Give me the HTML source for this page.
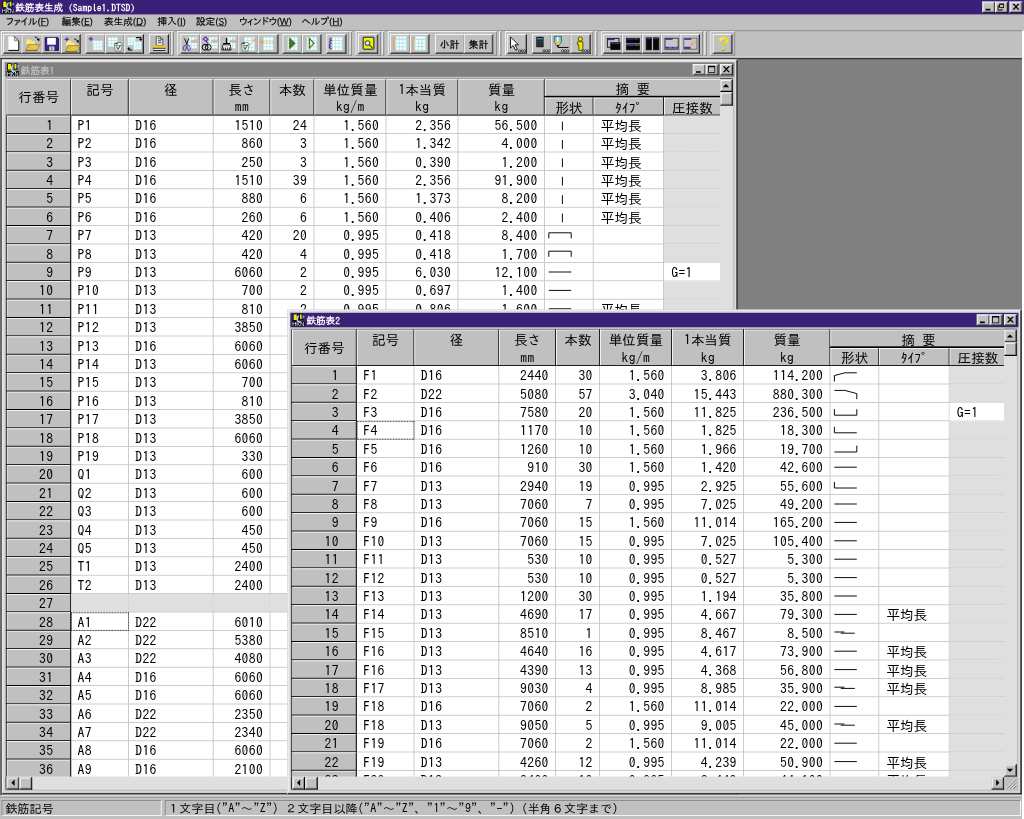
<!DOCTYPE html>
<html lang="ja"><head><meta charset="utf-8"><title>鉄筋表生成 (Sample1.DTSD)</title>
<style>
html,body{margin:0;padding:0}
body{width:1024px;height:819px;overflow:hidden;background:#c0c0c0;position:relative}
#scl{position:absolute;left:0;top:0;width:5120px;height:4096px;transform:scale(.2);transform-origin:0 0;will-change:transform;overflow:hidden}
#root{position:absolute;left:0;top:0;width:1280px;height:1024px;zoom:4;overflow:hidden;
 font-family:"IPAPGothic","IPAGothic","Liberation Sans","Noto Sans CJK JP",sans-serif;font-size:12px;color:#000}
#root div,#root span,#root i,#root b{box-sizing:border-box}
svg{display:block}
/* ---------- app title ---------- */
#title{position:absolute;left:0;top:0;width:1280px;height:18px;background:#3a2076}
#title .ico{position:absolute;left:2px;top:1px}
#title .tt{position:absolute;left:19px;top:0;line-height:19px;color:#fff;font-size:12px;white-space:nowrap;font-family:"IPAGothic","Liberation Mono","Noto Sans CJK JP",monospace;font-weight:bold}
.cb{position:absolute;top:2px;width:16px;height:14px;background:#c0c0c0;border:1px solid;border-color:#fff #000 #000 #fff;box-shadow:inset -1px -1px 0 #808080,inset 1px 1px 0 #dfdfdf}
.cb svg{position:absolute;left:1px;top:1px}
#title .b1{left:1228px}#title .b2{left:1244px}#title .b3{left:1262px}
/* ---------- menu ---------- */
#menu{position:absolute;left:0;top:18px;width:1280px;height:19px}
.mi{position:absolute;top:0;line-height:17px;white-space:nowrap;font-size:12px;-webkit-text-stroke:.2px #000}
.mi u{text-decoration:underline}
/* ---------- toolbar ---------- */
#tool{position:absolute;left:0;top:38px;width:1280px;height:34px;border-top:1px solid #808080}
#tool:after{content:"";position:absolute;left:0;top:32px;width:1280px;height:1px;background:#fff}
.band{position:absolute;top:0;height:30.5px;border:1px solid;border-color:#fff #808080 #808080 #fff}
.grp{position:absolute;top:0;height:30.5px;width:3px;border:1px solid;border-color:#fff #808080 #808080 #fff}
.tbtn{position:absolute;top:3.5px;height:24.5px;border:1px solid;border-color:#fff #000 #000 #fff;box-shadow:inset -1px -1px 0 #808080;overflow:hidden}
.tbtn.mid{border-right-color:#909090;box-shadow:inset 0 -1px 0 #808080}
.tbtn svg{position:absolute;left:-1px;top:-1px}
.tbtn.tx{font-size:12px;text-align:center;line-height:23px;font-weight:normal;letter-spacing:0;-webkit-text-stroke:.3px #000}
/* ---------- MDI client ---------- */
#mdiwrap{position:absolute;left:0;top:72px;width:1280px;height:923px;border:1px solid;border-color:#808080 #fff #fff #808080}
#mdi{position:absolute;left:0;top:0;width:1278px;height:921px;background:#808080;border:1px solid;border-color:#000 #c0c0c0 #c0c0c0 #000;overflow:hidden}
.win{position:absolute;background:#c0c0c0}
.fr1,.fr2{position:absolute;border:1px solid}
.fr1{left:0;top:0;right:0;bottom:0;border-width:1px 1.5px 1.5px 1px;border-color:#e4e4e4 #000 #000 #e4e4e4}
.fr2{left:1px;top:1px;right:1.5px;bottom:1.5px;border-color:#fff #808080 #808080 #fff}
.fr3{position:absolute;left:2px;top:2px;right:2px;bottom:2px;border:2px solid #dcdcdc}
.cap{position:absolute;left:4px;top:4px;right:4px;height:18px}
.inact .cap{background:#808080;color:#c0c0c0}
.act .cap{background:#3a2076;color:#fff}
.cap .ico{position:absolute;left:2px;top:1px}
.cap .ct{position:absolute;left:20px;top:0;line-height:19px;font-size:12px;white-space:nowrap;font-family:"IPAGothic","Liberation Mono","Noto Sans CJK JP",monospace;font-weight:bold}
.cap .b3{right:2px}.cap .b2{right:20px}.cap .b1{right:36px}
/* ---------- grid ---------- */
.grid{position:absolute}
.gbody{position:absolute;left:0;top:0;overflow:hidden;background:#fff;font-family:"IPAGothic","Liberation Mono","Noto Sans CJK JP",monospace;font-size:17px}
.hdr{position:absolute;left:0;top:0;width:100%;height:46.5px;background:#000}
.hc{position:absolute;background:#c0c0c0;border-top:1px solid #fff;border-left:1px solid #fff;border-right:.25px solid #000;border-bottom:.25px solid #000;text-align:center;white-space:nowrap;overflow:hidden;box-shadow:1px 0 0 #000}
.hc .h1{position:absolute;left:0;right:0;top:0;line-height:24px}
.hc .h2{position:absolute;left:0;right:0;top:22px;line-height:24px;letter-spacing:.5px}
.rows{position:absolute;left:0;top:0;width:100%;height:100%}
.r{position:absolute;left:0;width:100%;height:23px;line-height:25px;white-space:nowrap}
.r b{position:absolute;left:0;top:0;width:82px;height:23px;background:#c0c0c0;border:1.25px solid #000;border-top:0;box-shadow:inset 1px 1px 0 #fff;font-weight:normal;text-align:right;padding-right:21px;letter-spacing:.5px}
.r i{position:absolute;top:0;height:23px;border-right:1px solid #c0c0c0;border-bottom:1px solid #c0c0c0;font-style:normal;overflow:hidden}
.c1{left:82px;width:72px;padding-left:8px;letter-spacing:.5px}
.c2{left:154px;width:106px;padding-left:8px;letter-spacing:.5px}
.c3{left:260px;width:71px;text-align:right;padding-right:8px;letter-spacing:.5px}
.c4{left:331px;width:55px;text-align:right;padding-right:8px;letter-spacing:.5px}
.c5{left:386px;width:90px;text-align:right;padding-right:8px;letter-spacing:.5px}
.c6{left:476px;width:90px;text-align:right;padding-right:8px;letter-spacing:.5px}
.c7{left:566px;width:108px;text-align:right;padding-right:8px;letter-spacing:.5px}
.c8{left:674px;width:61px}
.c9{left:735px;width:88px;padding-left:9px}
.c10{left:823px;width:72px;padding-left:9px;background:#dfdfdf;border-bottom:1px dotted #b8b8b8 !important;border-right:0 !important;letter-spacing:.5px}
.c10.w{background:#fff;width:71px}
.r.blank i{background:#dfdfdf;border-color:#d0d0d0}
.r i.foc{outline:1px dotted #000;outline-offset:-1px}
.shp{position:absolute;left:0;top:0;fill:none;stroke:#000;stroke-width:1.2}
/* ---------- scrollbars ---------- */
.vs{position:absolute;width:16px;background:#dfdfdf;border-top:1px solid #000}
.hs{position:absolute;height:16px;background:#dfdfdf;border-left:1.25px solid #000}
.sb{position:absolute;left:0;top:0;width:16px;height:16px;background:#c0c0c0;border:1px solid;border-width:1px 1.25px 1.25px 1px;border-color:#dfdfdf #000 #000 #dfdfdf;box-shadow:inset -1px -1px 0 #808080,inset 1px 1px 0 #fff}
.sb svg{position:absolute;left:-1px;top:-1px}
.grip{position:absolute;top:0;width:16px;height:16px;background:#c0c0c0}
/* ---------- status ---------- */
#status{position:absolute;left:0;top:995px;width:1280px;height:29px;background:#c0c0c0}
#status:before{content:"";position:absolute;left:0;top:1.5px;width:1280px;height:1px;background:#808080;opacity:.6}
.sp{position:absolute;top:5px;height:20px;border:1px solid;border-color:#808080 #fff #fff #808080;overflow:hidden;white-space:nowrap}
.sp span{position:absolute;left:4px;top:0;line-height:19px;font-family:"IPAGothic","Liberation Mono","Noto Sans CJK JP",monospace;font-size:15px}
#redge{position:absolute;left:1277.5px;top:38px;width:2.5px;height:986px;background:#fff;z-index:3}
.sp .st2{left:2px;letter-spacing:.1px}
.sp .st2 em{font-style:normal;letter-spacing:.48px}

</style></head>
<body>
<svg width="0" height="0" style="position:absolute"><defs>
<g id="appico">
<rect x="0" y="10" width="16" height="6" fill="#000"/>
<rect x="1" y="0" width="6" height="9" fill="#000"/>
<rect x="2" y="1" width="4" height="7" fill="#f8e800"/>
<path d="M9.500 2.500q-3.500 1-3 5t5 2.500" fill="none" stroke="#a8e8e8" stroke-width="1.700"/>
<rect x="9" y="0" width="5" height="8" fill="#000"/>
<rect x="10" y="1" width="2" height="6" fill="#f0e020"/>
<rect x="12" y="1" width="1" height="6" fill="#40a040"/>
<path d="M13 3h2v2h-2" fill="none" stroke="#d0d0ff" stroke-width=".8"/>
<text x="0.300" y="15.400" font-family="Liberation Sans, sans-serif" font-size="6.300" font-weight="normal" fill="#fff" textLength="15" lengthAdjust="spacingAndGlyphs">HKN</text>
</g></defs></svg>
<div id="scl"><div id="root">
<div id="title"><svg class="ico" width="16" height="16" viewBox="0 0 16 16"><use href="#appico"/></svg><span class="tt">鉄筋表生成 (Sample1.DTSD)</span>
<span class="cb b1"><svg width="12" height="10" viewBox="0 0 12 10"><path d="M2 7h6v2H2z"/></svg></span>
<span class="cb b2"><svg width="12" height="10" viewBox="0 0 12 10"><path d="M3 0h6v6H3zM4 2v3h4V2zM1 3h2v1H2v4h4V7h1v2H1z" fill-rule="evenodd"/></svg></span>
<span class="cb b3"><svg width="12" height="10" viewBox="0 0 12 10"><path d="M1.500 .800h2.200L6 3.200 8.300 .800h2.200L7.100 4.500 10.500 8.200H8.300L6 5.800 3.700 8.200H1.500L4.900 4.500z"/></svg></span>
</div>
<div id="menu"><span class="mi" style="left:7.5px;width:56.5px">ファイル(<u>F</u>)</span><span class="mi" style="left:77px;width:39px">編集(<u>E</u>)</span><span class="mi" style="left:130px;width:51px">表生成(<u>D</u>)</span><span class="mi" style="left:197px;width:33px">挿入(<u>I</u>)</span><span class="mi" style="left:245px;width:39px">設定(<u>S</u>)</span><span class="mi" style="left:299px;width:63.5px">ウィンドウ(<u>W</u>)</span><span class="mi" style="left:377px;width:49px">ヘルプ(<u>H</u>)</span></div>
<div id="tool"><div class="band" style="left:1.25px;width:212.50px"></div>
<div class="tbtn mid" style="left:4.12px;width:23.00px"><svg width="26" height="26" viewBox="0 0 26 26"><path d="M6.500 3h7.500l5.500 5.500v12h-13z" fill="#fff"/><path d="M13.500 3l6 6v11.500h-13" fill="none" stroke="#000" stroke-width="1.250"/><path d="M14 4v4.500h4.500" fill="#d8d8d8" stroke="#606060" stroke-width=".8"/></svg></div>
<div class="tbtn mid" style="left:27.12px;width:24.88px"><svg width="26" height="26" viewBox="0 0 26 26"><g transform="translate(6 8)"><path d="M0 0.500q0-1.500 1.500-1.500h4l1.500 2h3.500v4H0z" fill="#f8f070"/><path d="M2.500 5h15l-4 7.500H-1z" fill="#d8b040"/><path d="M2.500 5h15l-4 7.500H-1z" fill="none" stroke="#907020" stroke-width=".7"/><path d="M3 7l9 4M6 6l8 4M1 9.500l8 2.500M9 6l6 3" stroke="#f0e060" stroke-width=".9"/><path d="M-1 12.800h14.500" stroke="#506020" stroke-width="1"/></g><path d="M16.500 3.500q3 .5 4.500 3.500" fill="none" stroke="#000" stroke-width="1.100"/><path d="M19 6.500l3.500-.8-.6 3.800z"/></svg></div>
<div class="tbtn mid" style="left:52.00px;width:24.25px"><svg width="26" height="26" viewBox="0 0 26 26"><path d="M4.500 4.500h15.500l1 1v15h-16.500z" fill="#3a2090" stroke="#100830" stroke-width="1"/><rect x="7" y="4.800" width="10.800" height="8.600" fill="#fff"/><rect x="9.600" y="15.500" width="6.400" height="5.300" fill="#d8d8d8"/><rect x="11.800" y="16.300" width="1.800" height="4.500" fill="#808080"/></svg></div>
<div class="tbtn" style="left:76.25px;width:24.50px"><svg width="26" height="26" viewBox="0 0 26 26"><g transform="translate(6.5 9.5)"><path d="M0 0.500q0-1.500 1.500-1.500h4l1.500 2h3.500v4H0z" fill="#f8f070"/><path d="M2.500 5h15l-4 7.500H-1z" fill="#d8b040"/><path d="M2.500 5h15l-4 7.500H-1z" fill="none" stroke="#907020" stroke-width=".7"/><path d="M3 7l9 4M6 6l8 4M1 9.500l8 2.500M9 6l6 3" stroke="#f0e060" stroke-width=".9"/><path d="M-1 12.800h14.500" stroke="#506020" stroke-width="1"/></g><path d="M16.500 6q3 .5 4 3" fill="none" stroke="#000" stroke-width="1.100"/><path d="M19 8.500l3.500-.6-.8 3.600z"/><path d="M4.500 6.800h5.500M7.200 4.200v5.200" stroke="#5030b0" stroke-width="1.500"/></svg></div>
<div class="tbtn mid" style="left:107.00px;width:24.25px"><svg width="26" height="26" viewBox="0 0 26 26"><rect x="9" y="8" width="12.4" height="12.4" fill="#b8e6e6"/><rect x="10" y="9" width="2.8" height="2.8" fill="#fff"/><rect x="10" y="12.8" width="2.8" height="2.8" fill="#fff"/><rect x="10" y="16.6" width="2.8" height="2.8" fill="#fff"/><rect x="13.8" y="9" width="2.8" height="2.8" fill="#fff"/><rect x="13.8" y="12.8" width="2.8" height="2.8" fill="#fff"/><rect x="13.8" y="16.6" width="2.8" height="2.8" fill="#fff"/><rect x="17.6" y="9" width="2.8" height="2.8" fill="#fff"/><rect x="17.6" y="12.8" width="2.8" height="2.8" fill="#fff"/><rect x="17.6" y="16.6" width="2.8" height="2.8" fill="#fff"/><path d="M3.800 6h5.500M6.500 3.400v5.200" stroke="#5030b0" stroke-width="1.500"/></svg></div>
<div class="tbtn mid" style="left:131.25px;width:24.12px"><svg width="26" height="26" viewBox="0 0 26 26"><rect x="3.6" y="3.8" width="12.4" height="12.4" fill="#b8e6e6"/><rect x="4.6" y="4.8" width="2.8" height="2.8" fill="#fff"/><rect x="4.6" y="8.6" width="2.8" height="2.8" fill="#fff"/><rect x="4.6" y="12.4" width="2.8" height="2.8" fill="#fff"/><rect x="8.4" y="4.8" width="2.8" height="2.8" fill="#fff"/><rect x="8.4" y="8.6" width="2.8" height="2.8" fill="#fff"/><rect x="8.4" y="12.4" width="2.8" height="2.8" fill="#fff"/><rect x="12.2" y="4.8" width="2.8" height="2.8" fill="#fff"/><rect x="12.2" y="8.6" width="2.8" height="2.8" fill="#fff"/><rect x="12.2" y="12.4" width="2.8" height="2.8" fill="#fff"/><g transform="translate(11.1 10.4)"><path d="M0.500 2.500h10l-1.500 8.500h-7z" fill="#f0f0f0" stroke="#707070" stroke-width=".9"/><ellipse cx="5.500" cy="2.300" rx="5.300" ry="1.900" fill="#fff" stroke="#505050" stroke-width=".9"/><path d="M2 1.800h3" stroke="#000" stroke-width="1.200"/><path d="M3.300 5.500l2 3.500 3-5.500" stroke="#308020" stroke-width="1.300" fill="none"/></g></svg></div>
<div class="tbtn" style="left:155.38px;width:24.31px"><svg width="26" height="26" viewBox="0 0 26 26"><rect x="3.6" y="3.8" width="10.5" height="10.5" fill="#b8e6e6"/><rect x="4.5" y="4.7" width="2.3" height="2.3" fill="#fff"/><rect x="4.5" y="7.9" width="2.3" height="2.3" fill="#fff"/><rect x="4.5" y="11.1" width="2.3" height="2.3" fill="#fff"/><rect x="7.7" y="4.7" width="2.3" height="2.3" fill="#fff"/><rect x="7.7" y="7.9" width="2.3" height="2.3" fill="#fff"/><rect x="7.7" y="11.1" width="2.3" height="2.3" fill="#fff"/><rect x="10.9" y="4.7" width="2.3" height="2.3" fill="#fff"/><rect x="10.9" y="7.9" width="2.3" height="2.3" fill="#fff"/><rect x="10.9" y="11.1" width="2.3" height="2.3" fill="#fff"/><rect x="11.1" y="9.2" width="10.5" height="10.5" fill="#b8e6e6"/><rect x="12" y="10.1" width="2.3" height="2.3" fill="#fff"/><rect x="12" y="13.3" width="2.3" height="2.3" fill="#fff"/><rect x="12" y="16.5" width="2.3" height="2.3" fill="#fff"/><rect x="15.2" y="10.1" width="2.3" height="2.3" fill="#fff"/><rect x="15.2" y="13.3" width="2.3" height="2.3" fill="#fff"/><rect x="15.2" y="16.5" width="2.3" height="2.3" fill="#fff"/><rect x="18.4" y="10.1" width="2.3" height="2.3" fill="#fff"/><rect x="18.4" y="13.3" width="2.3" height="2.3" fill="#fff"/><rect x="18.4" y="16.5" width="2.3" height="2.3" fill="#fff"/><path d="M14.600 4.300h5.800v2.500" fill="none" stroke="#000" stroke-width="1.300"/><path d="M18.300 6.300h4.200l-2.100 2.600z"/><path d="M10 20h-4.500v-1.500" fill="none" stroke="#000" stroke-width="1.300"/><path d="M3.400 19h4.200l-2.100-2.600z"/></svg></div>
<div class="tbtn" style="left:186.50px;width:24.75px"><svg width="26" height="26" viewBox="0 0 26 26"><path d="M8.800 3.500h5l3.200 3.200v7.500H8.800z" fill="#fff" stroke="#202020" stroke-width=".9"/><path d="M13.800 3.500v3.200h3.200" fill="none" stroke="#202020" stroke-width=".9"/><path d="M10.800 6h2M10.800 8.500h4.500M10.800 11h4.500" stroke="#000" stroke-width="1"/><rect x="4.600" y="14.400" width="15" height="3" fill="#f0d828"/><path d="M6 14.400v1.200M9 14.400v1.200M12 14.400v1.200M15 14.400v1.200M18 14.400v1.200" stroke="#e08030" stroke-width="1"/><path d="M4.600 17.900h15.500" stroke="#000" stroke-width="1.100"/><rect x="5.500" y="18.500" width="14" height="1.500" fill="#fff"/><path d="M5 20.500h15" stroke="#000" stroke-width="1.100"/></svg></div>
<div class="band" style="left:221.75px;width:215.12px"></div>
<div class="grp" style="left:214.25px"></div>
<div class="tbtn mid" style="left:225.62px;width:24.38px"><svg width="26" height="26" viewBox="0 0 26 26"><rect x="9.75" y="3.4" width="11.5" height="15" fill="#b8e6e6"/><rect x="10.75" y="4.4" width="2.5" height="2.5" fill="#fff"/><rect x="10.75" y="7.9" width="2.5" height="2.5" fill="#fff"/><rect x="10.75" y="11.4" width="2.5" height="2.5" fill="#fff"/><rect x="10.75" y="14.9" width="2.5" height="2.5" fill="#fff"/><rect x="14.25" y="4.4" width="2.5" height="2.5" fill="#fff"/><rect x="14.25" y="7.9" width="2.5" height="2.5" fill="#fff"/><rect x="14.25" y="11.4" width="2.5" height="2.5" fill="#fff"/><rect x="14.25" y="14.9" width="2.5" height="2.5" fill="#fff"/><rect x="17.75" y="4.4" width="2.5" height="2.5" fill="#fff"/><rect x="17.75" y="7.9" width="2.5" height="2.5" fill="#fff"/><rect x="17.75" y="11.4" width="2.5" height="2.5" fill="#fff"/><rect x="17.75" y="14.9" width="2.5" height="2.5" fill="#fff"/><rect x="13" y="7.500" width="8" height="3.500" fill="#c0c0c0"/><path d="M5.200 5.500l3.300 8M10.600 5.500l-3.300 8" stroke="#000" stroke-width="1.100" fill="none"/><ellipse cx="5.500" cy="17.300" rx="1.900" ry="3.300" fill="none" stroke="#5030a8" stroke-width="1.100" transform="rotate(15 5.500 17.300)"/><ellipse cx="10.300" cy="17.300" rx="1.900" ry="3.300" fill="none" stroke="#5030a8" stroke-width="1.100" transform="rotate(-15 10.300 17.300)"/><path d="M17.3 5L22.6 11M22.6 5L17.3 11" stroke="#f0a070" stroke-width="1.200"/></svg></div>
<div class="tbtn mid" style="left:250.00px;width:24.06px"><svg width="26" height="26" viewBox="0 0 26 26"><rect x="10.9" y="3.4" width="11.5" height="15" fill="#b8e6e6"/><rect x="11.9" y="4.4" width="2.5" height="2.5" fill="#fff"/><rect x="11.9" y="7.9" width="2.5" height="2.5" fill="#fff"/><rect x="11.9" y="11.4" width="2.5" height="2.5" fill="#fff"/><rect x="11.9" y="14.9" width="2.5" height="2.5" fill="#fff"/><rect x="15.4" y="4.4" width="2.5" height="2.5" fill="#fff"/><rect x="15.4" y="7.9" width="2.5" height="2.5" fill="#fff"/><rect x="15.4" y="11.4" width="2.5" height="2.5" fill="#fff"/><rect x="15.4" y="14.9" width="2.5" height="2.5" fill="#fff"/><rect x="18.9" y="4.4" width="2.5" height="2.5" fill="#fff"/><rect x="18.9" y="7.9" width="2.5" height="2.5" fill="#fff"/><rect x="18.9" y="11.4" width="2.5" height="2.5" fill="#fff"/><rect x="18.9" y="14.9" width="2.5" height="2.5" fill="#fff"/><rect x="14" y="7.500" width="8" height="3.500" fill="#c0c0c0"/><path d="M7 3.600l3 3.200-3 2-3-2.600zM7.500 8.500l2.500 3.500" fill="none" stroke="#5030b0" stroke-width="1.300"/><ellipse cx="6.300" cy="16.600" rx="3.600" ry="3.700" fill="none" stroke="#000" stroke-width="1.200"/><ellipse cx="10.300" cy="16.600" rx="3.600" ry="3.700" fill="none" stroke="#000" stroke-width="1.200"/><circle cx="19.5" cy="8" r="2.600" fill="none" stroke="#f0a080" stroke-width="1.100" stroke-dasharray="2.600 1.500"/></svg></div>
<div class="tbtn mid" style="left:274.06px;width:24.06px"><svg width="26" height="26" viewBox="0 0 26 26"><rect x="9.3" y="3.4" width="11.5" height="15" fill="#b8e6e6"/><rect x="10.3" y="4.4" width="2.5" height="2.5" fill="#fff"/><rect x="10.3" y="7.9" width="2.5" height="2.5" fill="#fff"/><rect x="10.3" y="11.4" width="2.5" height="2.5" fill="#fff"/><rect x="10.3" y="14.9" width="2.5" height="2.5" fill="#fff"/><rect x="13.8" y="4.4" width="2.5" height="2.5" fill="#fff"/><rect x="13.8" y="7.9" width="2.5" height="2.5" fill="#fff"/><rect x="13.8" y="11.4" width="2.5" height="2.5" fill="#fff"/><rect x="13.8" y="14.9" width="2.5" height="2.5" fill="#fff"/><rect x="17.3" y="4.4" width="2.5" height="2.5" fill="#fff"/><rect x="17.3" y="7.9" width="2.5" height="2.5" fill="#fff"/><rect x="17.3" y="11.4" width="2.5" height="2.5" fill="#fff"/><rect x="17.3" y="14.9" width="2.5" height="2.5" fill="#fff"/><rect x="13" y="7.500" width="8" height="3.500" fill="#c0c0c0"/><path d="M9.200 5v7" stroke="#000" stroke-width="1.800"/><path d="M5 11.800h8.500" stroke="#000" stroke-width="1.400"/><path d="M4.500 13.500h9.500l.8 6.500H3.200z" fill="#e8e8e8" stroke="#000" stroke-width="1"/><path d="M5.500 17v3M8 17v3M10.500 17v3M13 17v3" stroke="#000" stroke-width="1"/><circle cx="19.4" cy="8" r="2.600" fill="none" stroke="#f0a080" stroke-width="1.100" stroke-dasharray="2.600 1.500"/></svg></div>
<div class="tbtn mid" style="left:298.12px;width:24.06px"><svg width="26" height="26" viewBox="0 0 26 26"><rect x="7" y="3.4" width="13.8" height="18" fill="#b8e6e6"/><rect x="8.2" y="4.6" width="3" height="3" fill="#fff"/><rect x="8.2" y="8.8" width="3" height="3" fill="#fff"/><rect x="8.2" y="13" width="3" height="3" fill="#fff"/><rect x="8.2" y="17.2" width="3" height="3" fill="#fff"/><rect x="12.4" y="4.6" width="3" height="3" fill="#fff"/><rect x="12.4" y="8.8" width="3" height="3" fill="#fff"/><rect x="12.4" y="13" width="3" height="3" fill="#fff"/><rect x="12.4" y="17.2" width="3" height="3" fill="#fff"/><rect x="16.6" y="4.6" width="3" height="3" fill="#fff"/><rect x="16.6" y="8.8" width="3" height="3" fill="#fff"/><rect x="16.6" y="13" width="3" height="3" fill="#fff"/><rect x="16.6" y="17.2" width="3" height="3" fill="#fff"/><g transform="translate(3 10.2)"><path d="M0.500 2.500h10l-1.500 8.500h-7z" fill="#f0f0f0" stroke="#707070" stroke-width=".9"/><ellipse cx="5.500" cy="2.300" rx="5.300" ry="1.900" fill="#fff" stroke="#505050" stroke-width=".9"/><path d="M2 1.800h3" stroke="#000" stroke-width="1.200"/><path d="M3.300 5.500l2 3.500 3-5.500" stroke="#308020" stroke-width="1.300" fill="none"/></g><path d="M16.8 5.2L21.8 10.8M21.8 5.2L16.8 10.8" stroke="#f0a070" stroke-width="1.200"/></svg></div>
<div class="tbtn" style="left:322.19px;width:25.69px"><svg width="26" height="26" viewBox="0 0 26 26"><rect x="6.6" y="3.4" width="13.1" height="17.1" fill="#b8e6e6"/><rect x="7.7" y="4.5" width="2.9" height="2.9" fill="#fff"/><rect x="7.7" y="8.5" width="2.9" height="2.9" fill="#fff"/><rect x="7.7" y="12.5" width="2.9" height="2.9" fill="#fff"/><rect x="7.7" y="16.5" width="2.9" height="2.9" fill="#fff"/><rect x="11.7" y="4.5" width="2.9" height="2.9" fill="#fff"/><rect x="11.7" y="8.5" width="2.9" height="2.9" fill="#fff"/><rect x="11.7" y="12.5" width="2.9" height="2.9" fill="#fff"/><rect x="11.7" y="16.5" width="2.9" height="2.9" fill="#fff"/><rect x="15.7" y="4.5" width="2.9" height="2.9" fill="#fff"/><rect x="15.7" y="8.5" width="2.9" height="2.9" fill="#fff"/><rect x="15.7" y="12.5" width="2.9" height="2.9" fill="#fff"/><rect x="15.7" y="16.5" width="2.9" height="2.9" fill="#fff"/><path d="M6 10h14.600" stroke="#f0a070" stroke-width="1.500" stroke-dasharray="2.500 1.300"/><path d="M1.800 10l4.600-3v6z" fill="#e8a840"/></svg></div>
<div class="tbtn mid" style="left:353.25px;width:24.25px"><svg width="26" height="26" viewBox="0 0 26 26"><rect x="6" y="3.4" width="13.1" height="17.1" fill="#b8e6e6"/><rect x="7.1" y="4.5" width="2.9" height="2.9" fill="#fff"/><rect x="7.1" y="8.5" width="2.9" height="2.9" fill="#fff"/><rect x="7.1" y="12.5" width="2.9" height="2.9" fill="#fff"/><rect x="7.1" y="16.5" width="2.9" height="2.9" fill="#fff"/><rect x="11.1" y="4.5" width="2.9" height="2.9" fill="#fff"/><rect x="11.1" y="8.5" width="2.9" height="2.9" fill="#fff"/><rect x="11.1" y="12.5" width="2.9" height="2.9" fill="#fff"/><rect x="11.1" y="16.5" width="2.9" height="2.9" fill="#fff"/><rect x="15.1" y="4.5" width="2.9" height="2.9" fill="#fff"/><rect x="15.1" y="8.5" width="2.9" height="2.9" fill="#fff"/><rect x="15.1" y="12.5" width="2.9" height="2.9" fill="#fff"/><rect x="15.1" y="16.5" width="2.9" height="2.9" fill="#fff"/><path d="M8.600 4.800l7.200 7-7.200 7z" fill="#487018" stroke="#385810" stroke-width=".8"/><circle cx="11" cy="10.500" r=".8" fill="#30a0a0"/><circle cx="12" cy="13.500" r=".8" fill="#30a0a0"/></svg></div>
<div class="tbtn" style="left:377.50px;width:24.25px"><svg width="26" height="26" viewBox="0 0 26 26"><rect x="5.75" y="3.4" width="13.1" height="17.1" fill="#b8e6e6"/><rect x="6.85" y="4.5" width="2.9" height="2.9" fill="#fff"/><rect x="6.85" y="8.5" width="2.9" height="2.9" fill="#fff"/><rect x="6.85" y="12.5" width="2.9" height="2.9" fill="#fff"/><rect x="6.85" y="16.5" width="2.9" height="2.9" fill="#fff"/><rect x="10.85" y="4.5" width="2.9" height="2.9" fill="#fff"/><rect x="10.85" y="8.5" width="2.9" height="2.9" fill="#fff"/><rect x="10.85" y="12.5" width="2.9" height="2.9" fill="#fff"/><rect x="10.85" y="16.5" width="2.9" height="2.9" fill="#fff"/><rect x="14.85" y="4.5" width="2.9" height="2.9" fill="#fff"/><rect x="14.85" y="8.5" width="2.9" height="2.9" fill="#fff"/><rect x="14.85" y="12.5" width="2.9" height="2.9" fill="#fff"/><rect x="14.85" y="16.5" width="2.9" height="2.9" fill="#fff"/><path d="M9.200 5.500l5.800 6.200-5.800 6.200z" fill="none" stroke="#487018" stroke-width="1.500"/></svg></div>
<div class="tbtn" style="left:408.00px;width:25.00px"><svg width="26" height="26" viewBox="0 0 26 26"><rect x="6.9" y="3.4" width="13.4" height="17.5" fill="#b8e6e6"/><rect x="8" y="4.5" width="3" height="3" fill="#fff"/><rect x="8" y="8.6" width="3" height="3" fill="#fff"/><rect x="8" y="12.7" width="3" height="3" fill="#fff"/><rect x="8" y="16.8" width="3" height="3" fill="#fff"/><rect x="12.1" y="4.5" width="3" height="3" fill="#fff"/><rect x="12.1" y="8.6" width="3" height="3" fill="#fff"/><rect x="12.1" y="12.7" width="3" height="3" fill="#fff"/><rect x="12.1" y="16.8" width="3" height="3" fill="#fff"/><rect x="16.2" y="4.5" width="3" height="3" fill="#fff"/><rect x="16.2" y="8.6" width="3" height="3" fill="#fff"/><rect x="16.2" y="12.7" width="3" height="3" fill="#fff"/><rect x="16.2" y="16.8" width="3" height="3" fill="#fff"/><path d="M6.500 5q-3.500 1.500-.5 3.300q-3.500 1.500-.5 3.500q-3.500 1.500-.5 3.500q-3.500 1.500 1.500 3.300" fill="none" stroke="#5030a8" stroke-width="1.500"/></svg></div>
<div class="band" style="left:444.38px;width:31.88px"></div>
<div class="grp" style="left:436.88px"></div>
<div class="tbtn" style="left:447.81px;width:25.00px"><svg width="26" height="26" viewBox="0 0 26 26"><rect x="6.200" y="4" width="13.400" height="15" rx="1" fill="#f8ee00" stroke="#000" stroke-width="1.100"/><circle cx="11.700" cy="11.400" r="2.900" fill="#c8f0f0" stroke="#305878" stroke-width="1.300"/><path d="M14 13.700l3.800 3.800" stroke="#103030" stroke-width="1.300"/></svg></div>
<div class="band" style="left:484.69px;width:136.56px"></div>
<div class="grp" style="left:477.19px"></div>
<div class="tbtn mid" style="left:487.81px;width:24.69px"><svg width="26" height="26" viewBox="0 0 26 26"><rect x="6.3" y="6.3" width="14.6" height="14.6" fill="#b8e6e6"/><rect x="7.7" y="7.7" width="3" height="3" fill="#fff"/><rect x="7.7" y="12.1" width="3" height="3" fill="#fff"/><rect x="7.7" y="16.5" width="3" height="3" fill="#fff"/><rect x="12.1" y="7.7" width="3" height="3" fill="#fff"/><rect x="12.1" y="12.1" width="3" height="3" fill="#fff"/><rect x="12.1" y="16.5" width="3" height="3" fill="#fff"/><rect x="16.5" y="7.7" width="3" height="3" fill="#fff"/><rect x="16.5" y="12.1" width="3" height="3" fill="#fff"/><rect x="16.5" y="16.5" width="3" height="3" fill="#fff"/><rect x="6.300" y="2.300" width="14.600" height="4.200" fill="#b8e6e6"/><rect x="7.700" y="3.500" width="3" height="2" fill="#fff"/><rect x="12.100" y="3.500" width="3" height="2" fill="#fff"/><rect x="16.500" y="3.500" width="3" height="2" fill="#fff"/><path d="M7 4.300q-2.700.4-2.700 3v10q0 2.500 1.800 3.200" fill="none" stroke="#e8a050" stroke-width="1.500"/></svg></div>
<div class="tbtn" style="left:512.50px;width:24.25px"><svg width="26" height="26" viewBox="0 0 26 26"><rect x="5.5" y="6.3" width="14.6" height="14.6" fill="#b8e6e6"/><rect x="6.9" y="7.7" width="3" height="3" fill="#fff"/><rect x="6.9" y="12.1" width="3" height="3" fill="#fff"/><rect x="6.9" y="16.5" width="3" height="3" fill="#fff"/><rect x="11.3" y="7.7" width="3" height="3" fill="#fff"/><rect x="11.3" y="12.1" width="3" height="3" fill="#fff"/><rect x="11.3" y="16.5" width="3" height="3" fill="#fff"/><rect x="15.7" y="7.7" width="3" height="3" fill="#fff"/><rect x="15.7" y="12.1" width="3" height="3" fill="#fff"/><rect x="15.7" y="16.5" width="3" height="3" fill="#fff"/><rect x="5.500" y="2.300" width="14.600" height="4.200" fill="#b8e6e6"/><rect x="6.900" y="3.600" width="11.800" height="2" fill="#fff"/><path d="M6.300 4.300q-2.700.4-2.700 3v10q0 2.500 1.800 3.200" fill="none" stroke="#e8a050" stroke-width="1.500"/></svg></div>
<div class="tbtn tx mid" style="left:544.06px;width:35.62px">小計</div>
<div class="tbtn tx" style="left:579.69px;width:36.69px">集計</div>
<div class="band" style="left:631.25px;width:110.25px"></div>
<div class="grp" style="left:623.75px"></div>
<div class="tbtn" style="left:634.06px;width:24.56px"><svg width="26" height="26" viewBox="0 0 26 26"><path d="M4.200 3.800v13.800l3.300-3.200 3 6 2.200-1.100-3-5.800h4.500z" fill="#fff" stroke="#000" stroke-width="1.100"/><circle cx="15.5" cy="21" r="1.350" fill="#fff" stroke="#000" stroke-width=".9"/><circle cx="18.7" cy="21" r="1.350" fill="#fff" stroke="#000" stroke-width=".9"/><circle cx="21.9" cy="21" r="1.350" fill="#fff" stroke="#000" stroke-width=".9"/></svg></div>
<div class="tbtn mid" style="left:664.88px;width:24.19px"><svg width="26" height="26" viewBox="0 0 26 26"><rect x="5.300" y="3.500" width="9.200" height="13" fill="#181818"/><rect x="6.300" y="5.200" width="7.200" height="1.600" fill="#30b0b0"/><path d="M6.500 9h6.800M6.500 11.500h6.800M6.500 14h6.800" stroke="#707090" stroke-width="1" stroke-dasharray="2 .8"/><rect x="12.200" y="8.400" width="1.300" height="1.300" fill="#6040c0"/><circle cx="15" cy="21" r="1.350" fill="#fff" stroke="#000" stroke-width=".9"/><circle cx="18.2" cy="21" r="1.350" fill="#fff" stroke="#000" stroke-width=".9"/><circle cx="21.4" cy="21" r="1.350" fill="#fff" stroke="#000" stroke-width=".9"/></svg></div>
<div class="tbtn mid" style="left:689.06px;width:24.19px"><svg width="26" height="26" viewBox="0 0 26 26"><path d="M3.800 3h9v6.500l-4.500 7-4.500-7z" fill="#78c8d0" stroke="#184858" stroke-width=".9"/><rect x="7" y="3.500" width="2.300" height="6" fill="#fff"/><path d="M4.600 9.800l3.700 6 3.700-6q-3.700-1.500-7.400 0z" fill="#f0c858"/><path d="M6.800 13.800l1.500 3 1.500-3z" fill="#000"/><path d="M8.300 16.800h13.500" stroke="#000" stroke-width="1.200"/><circle cx="14.2" cy="21" r="1.350" fill="#fff" stroke="#000" stroke-width=".9"/><circle cx="17.4" cy="21" r="1.350" fill="#fff" stroke="#000" stroke-width=".9"/><circle cx="20.6" cy="21" r="1.350" fill="#fff" stroke="#000" stroke-width=".9"/></svg></div>
<div class="tbtn" style="left:713.25px;width:25.00px"><svg width="26" height="26" viewBox="0 0 26 26"><circle cx="12.100" cy="6.200" r="2.600" fill="#f8ee00" stroke="#383000" stroke-width="1"/><path d="M8.500 9.800h6.800v10.500h-5v-7h-1.800z" fill="#f8ee00" stroke="#383000" stroke-width="1"/><circle cx="15.6" cy="21" r="1.350" fill="#fff" stroke="#000" stroke-width=".9"/><circle cx="18.8" cy="21" r="1.350" fill="#fff" stroke="#000" stroke-width=".9"/><circle cx="22" cy="21" r="1.350" fill="#fff" stroke="#000" stroke-width=".9"/></svg></div>
<div class="band" style="left:751.25px;width:127.50px"></div>
<div class="grp" style="left:743.75px"></div>
<div class="tbtn mid" style="left:754.06px;width:23.75px"><svg width="26" height="26" viewBox="0 0 26 26"><rect x="5.200" y="5.500" width="14.500" height="11" fill="#c0c0c0" stroke="#101010" stroke-width="1.100"/><rect x="5.800" y="6" width="8.500" height="1.700" fill="#4028a0"/><rect x="9.500" y="10.800" width="11.500" height="8.500" fill="#080808" stroke="#101010" stroke-width="1.100"/><rect x="10" y="10.600" width="6.500" height="1.700" fill="#4028a0"/><path d="M15 6.800h4M17 11.500h3.500" stroke="#d0d0d0" stroke-width="1" stroke-dasharray="1 1"/></svg></div>
<div class="tbtn mid" style="left:777.81px;width:24.69px"><svg width="26" height="26" viewBox="0 0 26 26"><rect x="5.500" y="5.300" width="16" height="6" fill="#080808" stroke="#101010" stroke-width="1"/><rect x="6" y="5.300" width="8.500" height="1.700" fill="#4028a0"/><rect x="5.500" y="13.500" width="16" height="6.300" fill="#080808" stroke="#101010" stroke-width="1"/><rect x="6" y="13.500" width="8.500" height="1.700" fill="#4028a0"/><path d="M16 6.200h4.500M16 14.400h4.500" stroke="#d0d0d0" stroke-width="1" stroke-dasharray="1 1"/></svg></div>
<div class="tbtn mid" style="left:802.50px;width:23.75px"><svg width="26" height="26" viewBox="0 0 26 26"><rect x="5.200" y="4.800" width="6.600" height="15" fill="#080808" stroke="#101010" stroke-width="1"/><rect x="5.500" y="4.800" width="3.500" height="1.700" fill="#4028a0"/><rect x="14.300" y="4.800" width="6.800" height="15" fill="#080808" stroke="#101010" stroke-width="1"/><rect x="14.600" y="4.800" width="3.500" height="1.700" fill="#4028a0"/><path d="M9.300 5.700h2M18.500 5.700h2" stroke="#d0d0d0" stroke-width="1" stroke-dasharray="1 1"/></svg></div>
<div class="tbtn mid" style="left:826.25px;width:24.25px"><svg width="26" height="26" viewBox="0 0 26 26"><rect x="5" y="5.300" width="16.500" height="13.700" fill="#c8c8c8" stroke="#282828" stroke-width="1.100"/><rect x="5.500" y="5.500" width="9" height="1.800" fill="#4028a0"/><rect x="5.500" y="16" width="15.500" height="2.200" fill="#4028a0"/><path d="M16 6.400h4.500M10 17.100h3M16 17.100h3" stroke="#d0d0d0" stroke-width="1" stroke-dasharray="1 1"/></svg></div>
<div class="tbtn" style="left:850.50px;width:24.19px"><svg width="26" height="26" viewBox="0 0 26 26"><rect x="4.200" y="5.300" width="16.500" height="13.700" fill="#c8c8c8" stroke="#686868" stroke-width="1.100"/><rect x="4.700" y="5.500" width="9" height="1.800" fill="#4028a0"/><rect x="4.700" y="16" width="8" height="2.600" fill="#4028a0"/><path d="M15 6.400h4.500" stroke="#d0d0d0" stroke-width="1" stroke-dasharray="1 1"/><path d="M19.500 8.500l-5.500 5" stroke="#f0a060" stroke-width="1.400"/><path d="M12.500 14.800l4.800-.8-3.600-3.800z" fill="#f0a060"/></svg></div>
<div class="band" style="left:888.00px;width:31.12px"></div>
<div class="grp" style="left:880.50px"></div>
<div class="tbtn" style="left:891.12px;width:24.50px"><svg width="26" height="26" viewBox="0 0 26 26"><path d="M8.800 9q0-4.300 4.400-4.300t4.400 3.900q0 2.400-2.300 3.500t-2.100 3.300" fill="none" stroke="#f8e400" stroke-width="2.700"/><path d="M9.500 8.500q.2-3 3.500-3.200" fill="none" stroke="#fff" stroke-width=".8"/><path d="M16 11.500q-2 1-2.300 3.500" fill="none" stroke="#a09000" stroke-width=".7"/><circle cx="13" cy="19.600" r="1.600" fill="#2888a0"/><circle cx="12.800" cy="19" r="1.400" fill="#f8e400"/></svg></div></div>
<div id="mdiwrap"><div id="mdi">
<div class="win inact" id="w1" style="left:0px;top:0px;width:920px;height:919px">
<div class="fr1"></div><div class="fr2"></div><div class="fr3"></div>
<div class="cap"><svg class="ico" width="16" height="16" viewBox="0 0 16 16"><use href="#appico"/></svg><span class="ct">鉄筋表1</span><span class="cb b1"><svg width="12" height="10" viewBox="0 0 12 10"><path d="M2 7h6v2H2z"/></svg></span><span class="cb b2"><svg width="12" height="10" viewBox="0 0 12 10"><path d="M1 0h9v9H1zM2 2v6h7V2z" fill-rule="evenodd"/></svg></span><span class="cb b3"><svg width="12" height="10" viewBox="0 0 12 10"><path d="M1.500 .800h2.200L6 3.200 8.300 .800h2.200L7.100 4.500 10.500 8.200H8.300L6 5.800 3.700 8.200H1.500L4.900 4.500z"/></svg></span></div>
<div class="grid" style="left:5px;top:24px;width:909px;height:889px">
<div class="gbody" style="width:893px;height:873px">
<div class="hdr">
<div class="hc" style="left:1px;width:80px;top:1px;height:44.5px;line-height:43px">行番号</div>
<div class="hc" style="left:82px;width:71px;top:1px;height:44.5px"><span class="h1">記号</span><span class="h2"></span></div>
<div class="hc" style="left:154px;width:105px;top:1px;height:44.5px"><span class="h1">径</span><span class="h2"></span></div>
<div class="hc" style="left:260px;width:70px;top:1px;height:44.5px"><span class="h1">長さ</span><span class="h2">mm</span></div>
<div class="hc" style="left:331px;width:54px;top:1px;height:44.5px"><span class="h1">本数</span><span class="h2"></span></div>
<div class="hc" style="left:386px;width:89px;top:1px;height:44.5px"><span class="h1">単位質量</span><span class="h2">kg/m</span></div>
<div class="hc" style="left:476px;width:89px;top:1px;height:44.5px"><span class="h1">1本当質</span><span class="h2">kg</span></div>
<div class="hc" style="left:566px;width:107px;top:1px;height:44.5px"><span class="h1">質量</span><span class="h2">kg</span></div>
<div class="hc" style="left:674px;width:219px;top:1px;height:21px;line-height:23px;border-right:0;letter-spacing:9px;text-indent:9px">摘要</div>
<div class="hc" style="left:674px;width:60px;top:24px;height:21.5px;line-height:23px;">形状</div>
<div class="hc" style="left:735px;width:87px;top:24px;height:21.5px;line-height:23px;">ﾀｲﾌﾟ</div>
<div class="hc" style="left:823px;width:70px;top:24px;height:21.5px;line-height:23px;border-right:0;">圧接数</div>
</div>
<div class="rows">
<div class="r" style="top:46.5px"><b>1</b><i class="c1">P1</i><i class="c2">D16</i><i class="c3">1510</i><i class="c4">24</i><i class="c5">1.560</i><i class="c6">2.356</i><i class="c7">56.500</i><i class="c8"><svg class="shp" width="60" height="22" viewBox="0 0 60 22"><path d="M22 7.500v11"/></svg></i><i class="c9">平均長</i><i class="c10"></i></div>
<div class="r" style="top:69.5px"><b>2</b><i class="c1">P2</i><i class="c2">D16</i><i class="c3">860</i><i class="c4">3</i><i class="c5">1.560</i><i class="c6">1.342</i><i class="c7">4.000</i><i class="c8"><svg class="shp" width="60" height="22" viewBox="0 0 60 22"><path d="M22 7.500v11"/></svg></i><i class="c9">平均長</i><i class="c10"></i></div>
<div class="r" style="top:92.5px"><b>3</b><i class="c1">P3</i><i class="c2">D16</i><i class="c3">250</i><i class="c4">3</i><i class="c5">1.560</i><i class="c6">0.390</i><i class="c7">1.200</i><i class="c8"><svg class="shp" width="60" height="22" viewBox="0 0 60 22"><path d="M22 7.500v11"/></svg></i><i class="c9">平均長</i><i class="c10"></i></div>
<div class="r" style="top:115.5px"><b>4</b><i class="c1">P4</i><i class="c2">D16</i><i class="c3">1510</i><i class="c4">39</i><i class="c5">1.560</i><i class="c6">2.356</i><i class="c7">91.900</i><i class="c8"><svg class="shp" width="60" height="22" viewBox="0 0 60 22"><path d="M22 7.500v11"/></svg></i><i class="c9">平均長</i><i class="c10"></i></div>
<div class="r" style="top:138.5px"><b>5</b><i class="c1">P5</i><i class="c2">D16</i><i class="c3">880</i><i class="c4">6</i><i class="c5">1.560</i><i class="c6">1.373</i><i class="c7">8.200</i><i class="c8"><svg class="shp" width="60" height="22" viewBox="0 0 60 22"><path d="M22 7.500v11"/></svg></i><i class="c9">平均長</i><i class="c10"></i></div>
<div class="r" style="top:161.5px"><b>6</b><i class="c1">P6</i><i class="c2">D16</i><i class="c3">260</i><i class="c4">6</i><i class="c5">1.560</i><i class="c6">0.406</i><i class="c7">2.400</i><i class="c8"><svg class="shp" width="60" height="22" viewBox="0 0 60 22"><path d="M22 7.500v11"/></svg></i><i class="c9">平均長</i><i class="c10"></i></div>
<div class="r" style="top:184.5px"><b>7</b><i class="c1">P7</i><i class="c2">D13</i><i class="c3">420</i><i class="c4">20</i><i class="c5">0.995</i><i class="c6">0.418</i><i class="c7">8.400</i><i class="c8"><svg class="shp" width="60" height="22" viewBox="0 0 60 22"><path d="M5 15.500V8.500H33V15.500"/></svg></i><i class="c9"></i><i class="c10"></i></div>
<div class="r" style="top:207.5px"><b>8</b><i class="c1">P8</i><i class="c2">D13</i><i class="c3">420</i><i class="c4">4</i><i class="c5">0.995</i><i class="c6">0.418</i><i class="c7">1.700</i><i class="c8"><svg class="shp" width="60" height="22" viewBox="0 0 60 22"><path d="M5 15.500V8.500H33V15.500"/></svg></i><i class="c9"></i><i class="c10"></i></div>
<div class="r" style="top:230.5px"><b>9</b><i class="c1">P9</i><i class="c2">D13</i><i class="c3">6060</i><i class="c4">2</i><i class="c5">0.995</i><i class="c6">6.030</i><i class="c7">12.100</i><i class="c8"><svg class="shp" width="60" height="22" viewBox="0 0 60 22"><path d="M5 11.500H33"/></svg></i><i class="c9"></i><i class="c10 w">G=1</i></div>
<div class="r" style="top:253.5px"><b>10</b><i class="c1">P10</i><i class="c2">D13</i><i class="c3">700</i><i class="c4">2</i><i class="c5">0.995</i><i class="c6">0.697</i><i class="c7">1.400</i><i class="c8"><svg class="shp" width="60" height="22" viewBox="0 0 60 22"><path d="M5 11.500H33"/></svg></i><i class="c9"></i><i class="c10"></i></div>
<div class="r" style="top:276.5px"><b>11</b><i class="c1">P11</i><i class="c2">D13</i><i class="c3">810</i><i class="c4">2</i><i class="c5">0.995</i><i class="c6">0.806</i><i class="c7">1.600</i><i class="c8"><svg class="shp" width="60" height="22" viewBox="0 0 60 22"><path d="M5 11.500H33"/></svg></i><i class="c9">平均長</i><i class="c10"></i></div>
<div class="r" style="top:299.5px"><b>12</b><i class="c1">P12</i><i class="c2">D13</i><i class="c3">3850</i><i class="c4"></i><i class="c5"></i><i class="c6"></i><i class="c7"></i><i class="c8"></i><i class="c9"></i><i class="c10"></i></div>
<div class="r" style="top:322.5px"><b>13</b><i class="c1">P13</i><i class="c2">D16</i><i class="c3">6060</i><i class="c4"></i><i class="c5"></i><i class="c6"></i><i class="c7"></i><i class="c8"></i><i class="c9"></i><i class="c10"></i></div>
<div class="r" style="top:345.5px"><b>14</b><i class="c1">P14</i><i class="c2">D13</i><i class="c3">6060</i><i class="c4"></i><i class="c5"></i><i class="c6"></i><i class="c7"></i><i class="c8"></i><i class="c9"></i><i class="c10"></i></div>
<div class="r" style="top:368.5px"><b>15</b><i class="c1">P15</i><i class="c2">D13</i><i class="c3">700</i><i class="c4"></i><i class="c5"></i><i class="c6"></i><i class="c7"></i><i class="c8"></i><i class="c9"></i><i class="c10"></i></div>
<div class="r" style="top:391.5px"><b>16</b><i class="c1">P16</i><i class="c2">D13</i><i class="c3">810</i><i class="c4"></i><i class="c5"></i><i class="c6"></i><i class="c7"></i><i class="c8"></i><i class="c9"></i><i class="c10"></i></div>
<div class="r" style="top:414.5px"><b>17</b><i class="c1">P17</i><i class="c2">D13</i><i class="c3">3850</i><i class="c4"></i><i class="c5"></i><i class="c6"></i><i class="c7"></i><i class="c8"></i><i class="c9"></i><i class="c10"></i></div>
<div class="r" style="top:437.5px"><b>18</b><i class="c1">P18</i><i class="c2">D13</i><i class="c3">6060</i><i class="c4"></i><i class="c5"></i><i class="c6"></i><i class="c7"></i><i class="c8"></i><i class="c9"></i><i class="c10"></i></div>
<div class="r" style="top:460.5px"><b>19</b><i class="c1">P19</i><i class="c2">D13</i><i class="c3">330</i><i class="c4"></i><i class="c5"></i><i class="c6"></i><i class="c7"></i><i class="c8"></i><i class="c9"></i><i class="c10"></i></div>
<div class="r" style="top:483.5px"><b>20</b><i class="c1">Q1</i><i class="c2">D13</i><i class="c3">600</i><i class="c4"></i><i class="c5"></i><i class="c6"></i><i class="c7"></i><i class="c8"></i><i class="c9"></i><i class="c10"></i></div>
<div class="r" style="top:506.5px"><b>21</b><i class="c1">Q2</i><i class="c2">D13</i><i class="c3">600</i><i class="c4"></i><i class="c5"></i><i class="c6"></i><i class="c7"></i><i class="c8"></i><i class="c9"></i><i class="c10"></i></div>
<div class="r" style="top:529.5px"><b>22</b><i class="c1">Q3</i><i class="c2">D13</i><i class="c3">600</i><i class="c4"></i><i class="c5"></i><i class="c6"></i><i class="c7"></i><i class="c8"></i><i class="c9"></i><i class="c10"></i></div>
<div class="r" style="top:552.5px"><b>23</b><i class="c1">Q4</i><i class="c2">D13</i><i class="c3">450</i><i class="c4"></i><i class="c5"></i><i class="c6"></i><i class="c7"></i><i class="c8"></i><i class="c9"></i><i class="c10"></i></div>
<div class="r" style="top:575.5px"><b>24</b><i class="c1">Q5</i><i class="c2">D13</i><i class="c3">450</i><i class="c4"></i><i class="c5"></i><i class="c6"></i><i class="c7"></i><i class="c8"></i><i class="c9"></i><i class="c10"></i></div>
<div class="r" style="top:598.5px"><b>25</b><i class="c1">T1</i><i class="c2">D13</i><i class="c3">2400</i><i class="c4"></i><i class="c5"></i><i class="c6"></i><i class="c7"></i><i class="c8"></i><i class="c9"></i><i class="c10"></i></div>
<div class="r" style="top:621.5px"><b>26</b><i class="c1">T2</i><i class="c2">D13</i><i class="c3">2400</i><i class="c4"></i><i class="c5"></i><i class="c6"></i><i class="c7"></i><i class="c8"></i><i class="c9"></i><i class="c10"></i></div>
<div class="r blank" style="top:644.5px"><b>27</b><i class="c1"></i><i class="c2"></i><i class="c3"></i><i class="c4"></i><i class="c5"></i><i class="c6"></i><i class="c7"></i><i class="c8"></i><i class="c9"></i><i class="c10"></i></div>
<div class="r" style="top:667.5px"><b>28</b><i class="c1 foc">A1</i><i class="c2">D22</i><i class="c3">6010</i><i class="c4"></i><i class="c5"></i><i class="c6"></i><i class="c7"></i><i class="c8"></i><i class="c9"></i><i class="c10"></i></div>
<div class="r" style="top:690.5px"><b>29</b><i class="c1">A2</i><i class="c2">D22</i><i class="c3">5380</i><i class="c4"></i><i class="c5"></i><i class="c6"></i><i class="c7"></i><i class="c8"></i><i class="c9"></i><i class="c10"></i></div>
<div class="r" style="top:713.5px"><b>30</b><i class="c1">A3</i><i class="c2">D22</i><i class="c3">4080</i><i class="c4"></i><i class="c5"></i><i class="c6"></i><i class="c7"></i><i class="c8"></i><i class="c9"></i><i class="c10"></i></div>
<div class="r" style="top:736.5px"><b>31</b><i class="c1">A4</i><i class="c2">D16</i><i class="c3">6060</i><i class="c4"></i><i class="c5"></i><i class="c6"></i><i class="c7"></i><i class="c8"></i><i class="c9"></i><i class="c10"></i></div>
<div class="r" style="top:759.5px"><b>32</b><i class="c1">A5</i><i class="c2">D16</i><i class="c3">6060</i><i class="c4"></i><i class="c5"></i><i class="c6"></i><i class="c7"></i><i class="c8"></i><i class="c9"></i><i class="c10"></i></div>
<div class="r" style="top:782.5px"><b>33</b><i class="c1">A6</i><i class="c2">D22</i><i class="c3">2350</i><i class="c4"></i><i class="c5"></i><i class="c6"></i><i class="c7"></i><i class="c8"></i><i class="c9"></i><i class="c10"></i></div>
<div class="r" style="top:805.5px"><b>34</b><i class="c1">A7</i><i class="c2">D22</i><i class="c3">2340</i><i class="c4"></i><i class="c5"></i><i class="c6"></i><i class="c7"></i><i class="c8"></i><i class="c9"></i><i class="c10"></i></div>
<div class="r" style="top:828.5px"><b>35</b><i class="c1">A8</i><i class="c2">D16</i><i class="c3">6060</i><i class="c4"></i><i class="c5"></i><i class="c6"></i><i class="c7"></i><i class="c8"></i><i class="c9"></i><i class="c10"></i></div>
<div class="r" style="top:851.5px"><b>36</b><i class="c1">A9</i><i class="c2">D16</i><i class="c3">2100</i><i class="c4"></i><i class="c5"></i><i class="c6"></i><i class="c7"></i><i class="c8"></i><i class="c9"></i><i class="c10"></i></div>
</div>
</div>
<div class="vs" style="left:893px;top:0;height:873px"><span class="sb" style="top:0"><svg width="16" height="16" viewBox="0 0 16 16"><path d="M3.500 10L7.500 6 11.500 10z"/></svg></span><span class="sb th" style="top:16px;height:17px"></span></div>
<div class="hs" style="left:0;top:873px;width:909px"><span class="sb" style="left:0"><svg width="16" height="16" viewBox="0 0 16 16"><path d="M10 3.500L6 7.500 10 11.500z"/></svg></span><span class="sb th" style="left:16px;width:16px"></span></div>
</div>
</div>
<div class="win act" id="w2" style="left:357px;top:313px;width:918px;height:606px">
<div class="fr1"></div><div class="fr2"></div><div class="fr3"></div>
<div class="cap"><svg class="ico" width="16" height="16" viewBox="0 0 16 16"><use href="#appico"/></svg><span class="ct">鉄筋表2</span><span class="cb b1"><svg width="12" height="10" viewBox="0 0 12 10"><path d="M2 7h6v2H2z"/></svg></span><span class="cb b2"><svg width="12" height="10" viewBox="0 0 12 10"><path d="M1 0h9v9H1zM2 2v6h7V2z" fill-rule="evenodd"/></svg></span><span class="cb b3"><svg width="12" height="10" viewBox="0 0 12 10"><path d="M1.500 .800h2.200L6 3.200 8.300 .800h2.200L7.100 4.500 10.500 8.200H8.300L6 5.800 3.700 8.200H1.500L4.900 4.500z"/></svg></span></div>
<div class="grid" style="left:5px;top:24px;width:907px;height:576px">
<div class="gbody" style="width:891px;height:560px">
<div class="hdr">
<div class="hc" style="left:1px;width:80px;top:1px;height:44.5px;line-height:43px">行番号</div>
<div class="hc" style="left:82px;width:71px;top:1px;height:44.5px"><span class="h1">記号</span><span class="h2"></span></div>
<div class="hc" style="left:154px;width:105px;top:1px;height:44.5px"><span class="h1">径</span><span class="h2"></span></div>
<div class="hc" style="left:260px;width:70px;top:1px;height:44.5px"><span class="h1">長さ</span><span class="h2">mm</span></div>
<div class="hc" style="left:331px;width:54px;top:1px;height:44.5px"><span class="h1">本数</span><span class="h2"></span></div>
<div class="hc" style="left:386px;width:89px;top:1px;height:44.5px"><span class="h1">単位質量</span><span class="h2">kg/m</span></div>
<div class="hc" style="left:476px;width:89px;top:1px;height:44.5px"><span class="h1">1本当質</span><span class="h2">kg</span></div>
<div class="hc" style="left:566px;width:107px;top:1px;height:44.5px"><span class="h1">質量</span><span class="h2">kg</span></div>
<div class="hc" style="left:674px;width:219px;top:1px;height:21px;line-height:23px;border-right:0;letter-spacing:9px;text-indent:9px">摘要</div>
<div class="hc" style="left:674px;width:60px;top:24px;height:21.5px;line-height:23px;">形状</div>
<div class="hc" style="left:735px;width:87px;top:24px;height:21.5px;line-height:23px;">ﾀｲﾌﾟ</div>
<div class="hc" style="left:823px;width:70px;top:24px;height:21.5px;line-height:23px;border-right:0;">圧接数</div>
</div>
<div class="rows">
<div class="r" style="top:46.5px"><b>1</b><i class="c1">F1</i><i class="c2">D16</i><i class="c3">2440</i><i class="c4">30</i><i class="c5">1.560</i><i class="c6">3.806</i><i class="c7">114.200</i><i class="c8"><svg class="shp" width="60" height="22" viewBox="0 0 60 22"><path d="M5 19.500V12L18 8.500H33"/></svg></i><i class="c9"></i><i class="c10"></i></div>
<div class="r" style="top:69.5px"><b>2</b><i class="c1">F2</i><i class="c2">D22</i><i class="c3">5080</i><i class="c4">57</i><i class="c5">3.040</i><i class="c6">15.443</i><i class="c7">880.300</i><i class="c8"><svg class="shp" width="60" height="22" viewBox="0 0 60 22"><path d="M5 7.500H18L33 11.500V18.500"/></svg></i><i class="c9"></i><i class="c10"></i></div>
<div class="r" style="top:92.5px"><b>3</b><i class="c1">F3</i><i class="c2">D16</i><i class="c3">7580</i><i class="c4">20</i><i class="c5">1.560</i><i class="c6">11.825</i><i class="c7">236.500</i><i class="c8"><svg class="shp" width="60" height="22" viewBox="0 0 60 22"><path d="M5 8V15.500H33V8"/></svg></i><i class="c9"></i><i class="c10 w">G=1</i></div>
<div class="r" style="top:115.5px"><b>4</b><i class="c1 foc">F4</i><i class="c2">D16</i><i class="c3">1170</i><i class="c4">10</i><i class="c5">1.560</i><i class="c6">1.825</i><i class="c7">18.300</i><i class="c8"><svg class="shp" width="60" height="22" viewBox="0 0 60 22"><path d="M5 7V14.500H33"/></svg></i><i class="c9"></i><i class="c10"></i></div>
<div class="r" style="top:138.5px"><b>5</b><i class="c1">F5</i><i class="c2">D16</i><i class="c3">1260</i><i class="c4">10</i><i class="c5">1.560</i><i class="c6">1.966</i><i class="c7">19.700</i><i class="c8"><svg class="shp" width="60" height="22" viewBox="0 0 60 22"><path d="M5 15.500H33V7.500"/></svg></i><i class="c9"></i><i class="c10"></i></div>
<div class="r" style="top:161.5px"><b>6</b><i class="c1">F6</i><i class="c2">D16</i><i class="c3">910</i><i class="c4">30</i><i class="c5">1.560</i><i class="c6">1.420</i><i class="c7">42.600</i><i class="c8"><svg class="shp" width="60" height="22" viewBox="0 0 60 22"><path d="M5 11.500H33"/></svg></i><i class="c9"></i><i class="c10"></i></div>
<div class="r" style="top:184.5px"><b>7</b><i class="c1">F7</i><i class="c2">D13</i><i class="c3">2940</i><i class="c4">19</i><i class="c5">0.995</i><i class="c6">2.925</i><i class="c7">55.600</i><i class="c8"><svg class="shp" width="60" height="22" viewBox="0 0 60 22"><path d="M5 7V14.500H33"/></svg></i><i class="c9"></i><i class="c10"></i></div>
<div class="r" style="top:207.5px"><b>8</b><i class="c1">F8</i><i class="c2">D13</i><i class="c3">7060</i><i class="c4">7</i><i class="c5">0.995</i><i class="c6">7.025</i><i class="c7">49.200</i><i class="c8"><svg class="shp" width="60" height="22" viewBox="0 0 60 22"><path d="M5 11.500H33"/></svg></i><i class="c9"></i><i class="c10"></i></div>
<div class="r" style="top:230.5px"><b>9</b><i class="c1">F9</i><i class="c2">D16</i><i class="c3">7060</i><i class="c4">15</i><i class="c5">1.560</i><i class="c6">11.014</i><i class="c7">165.200</i><i class="c8"><svg class="shp" width="60" height="22" viewBox="0 0 60 22"><path d="M5 11.500H33"/></svg></i><i class="c9"></i><i class="c10"></i></div>
<div class="r" style="top:253.5px"><b>10</b><i class="c1">F10</i><i class="c2">D13</i><i class="c3">7060</i><i class="c4">15</i><i class="c5">0.995</i><i class="c6">7.025</i><i class="c7">105.400</i><i class="c8"><svg class="shp" width="60" height="22" viewBox="0 0 60 22"><path d="M5 11.500H33"/></svg></i><i class="c9"></i><i class="c10"></i></div>
<div class="r" style="top:276.5px"><b>11</b><i class="c1">F11</i><i class="c2">D13</i><i class="c3">530</i><i class="c4">10</i><i class="c5">0.995</i><i class="c6">0.527</i><i class="c7">5.300</i><i class="c8"><svg class="shp" width="60" height="22" viewBox="0 0 60 22"><path d="M5 11.500H33"/></svg></i><i class="c9"></i><i class="c10"></i></div>
<div class="r" style="top:299.5px"><b>12</b><i class="c1">F12</i><i class="c2">D13</i><i class="c3">530</i><i class="c4">10</i><i class="c5">0.995</i><i class="c6">0.527</i><i class="c7">5.300</i><i class="c8"><svg class="shp" width="60" height="22" viewBox="0 0 60 22"><path d="M5 11.500H33"/></svg></i><i class="c9"></i><i class="c10"></i></div>
<div class="r" style="top:322.5px"><b>13</b><i class="c1">F13</i><i class="c2">D13</i><i class="c3">1200</i><i class="c4">30</i><i class="c5">0.995</i><i class="c6">1.194</i><i class="c7">35.800</i><i class="c8"><svg class="shp" width="60" height="22" viewBox="0 0 60 22"><path d="M5 11.500H33"/></svg></i><i class="c9"></i><i class="c10"></i></div>
<div class="r" style="top:345.5px"><b>14</b><i class="c1">F14</i><i class="c2">D13</i><i class="c3">4690</i><i class="c4">17</i><i class="c5">0.995</i><i class="c6">4.667</i><i class="c7">79.300</i><i class="c8"><svg class="shp" width="60" height="22" viewBox="0 0 60 22"><path d="M5 11.500H33"/></svg></i><i class="c9">平均長</i><i class="c10"></i></div>
<div class="r" style="top:368.5px"><b>15</b><i class="c1">F15</i><i class="c2">D13</i><i class="c3">8510</i><i class="c4">1</i><i class="c5">0.995</i><i class="c6">8.467</i><i class="c7">8.500</i><i class="c8"><svg class="shp" width="60" height="22" viewBox="0 0 60 22"><path d="M5 10.500H17.500M13 12H30.500"/></svg></i><i class="c9"></i><i class="c10"></i></div>
<div class="r" style="top:391.5px"><b>16</b><i class="c1">F16</i><i class="c2">D13</i><i class="c3">4640</i><i class="c4">16</i><i class="c5">0.995</i><i class="c6">4.617</i><i class="c7">73.900</i><i class="c8"><svg class="shp" width="60" height="22" viewBox="0 0 60 22"><path d="M5 11.500H33"/></svg></i><i class="c9">平均長</i><i class="c10"></i></div>
<div class="r" style="top:414.5px"><b>17</b><i class="c1">F16</i><i class="c2">D13</i><i class="c3">4390</i><i class="c4">13</i><i class="c5">0.995</i><i class="c6">4.368</i><i class="c7">56.800</i><i class="c8"><svg class="shp" width="60" height="22" viewBox="0 0 60 22"><path d="M5 11.500H33"/></svg></i><i class="c9">平均長</i><i class="c10"></i></div>
<div class="r" style="top:437.5px"><b>18</b><i class="c1">F17</i><i class="c2">D13</i><i class="c3">9030</i><i class="c4">4</i><i class="c5">0.995</i><i class="c6">8.985</i><i class="c7">35.900</i><i class="c8"><svg class="shp" width="60" height="22" viewBox="0 0 60 22"><path d="M5 10.500H17.500M13 12H30.500"/></svg></i><i class="c9">平均長</i><i class="c10"></i></div>
<div class="r" style="top:460.5px"><b>19</b><i class="c1">F18</i><i class="c2">D16</i><i class="c3">7060</i><i class="c4">2</i><i class="c5">1.560</i><i class="c6">11.014</i><i class="c7">22.000</i><i class="c8"><svg class="shp" width="60" height="22" viewBox="0 0 60 22"><path d="M5 11.500H33"/></svg></i><i class="c9"></i><i class="c10"></i></div>
<div class="r" style="top:483.5px"><b>20</b><i class="c1">F18</i><i class="c2">D13</i><i class="c3">9050</i><i class="c4">5</i><i class="c5">0.995</i><i class="c6">9.005</i><i class="c7">45.000</i><i class="c8"><svg class="shp" width="60" height="22" viewBox="0 0 60 22"><path d="M5 10.500H17.500M13 12H30.500"/></svg></i><i class="c9">平均長</i><i class="c10"></i></div>
<div class="r" style="top:506.5px"><b>21</b><i class="c1">F19</i><i class="c2">D16</i><i class="c3">7060</i><i class="c4">2</i><i class="c5">1.560</i><i class="c6">11.014</i><i class="c7">22.000</i><i class="c8"><svg class="shp" width="60" height="22" viewBox="0 0 60 22"><path d="M5 11.500H33"/></svg></i><i class="c9"></i><i class="c10"></i></div>
<div class="r" style="top:529.5px"><b>22</b><i class="c1">F19</i><i class="c2">D13</i><i class="c3">4260</i><i class="c4">12</i><i class="c5">0.995</i><i class="c6">4.239</i><i class="c7">50.900</i><i class="c8"><svg class="shp" width="60" height="22" viewBox="0 0 60 22"><path d="M5 11.500H33"/></svg></i><i class="c9">平均長</i><i class="c10"></i></div>
<div class="r" style="top:552.5px"><b>23</b><i class="c1">F20</i><i class="c2">D13</i><i class="c3">2400</i><i class="c4">10</i><i class="c5">0.995</i><i class="c6">2.449</i><i class="c7">44.100</i><i class="c8"><svg class="shp" width="60" height="22" viewBox="0 0 60 22"><path d="M5 11.500H33"/></svg></i><i class="c9">平均長</i><i class="c10"></i></div>
</div>
</div>
<div class="vs" style="left:891px;top:0;height:560px"><span class="sb" style="top:0"><svg width="16" height="16" viewBox="0 0 16 16"><path d="M3.500 10L7.500 6 11.500 10z"/></svg></span><span class="sb th" style="top:16px;height:17px"></span><span class="sb" style="top:543px"><svg width="16" height="16" viewBox="0 0 16 16"><path d="M3.500 6L7.500 10 11.500 6z"/></svg></span></div>
<div class="hs" style="left:0;top:560px;width:907px"><span class="sb" style="left:0"><svg width="16" height="16" viewBox="0 0 16 16"><path d="M10 3.500L6 7.500 10 11.500z"/></svg></span><span class="sb th" style="left:16px;width:16px"></span><span class="sb" style="left:874px"><svg width="16" height="16" viewBox="0 0 16 16"><path d="M6 3.500L10 7.500 6 11.500z"/></svg></span><span class="grip" style="left:890px"><svg width="16" height="16" viewBox="0 0 16 16"><path d="M15 3L3 15M15 7L7 15M15 11l-4 4" stroke="#808080" stroke-width="1.500" fill="none"/><path d="M15 2L2 15M15 6L6 15M15 10l-5 5" stroke="#fff" stroke-width="1" fill="none"/></svg></span></div>
</div>
</div>
</div></div>
<div id="redge"></div>
<div id="status"><div class="sp" style="left:2px;width:200px"><span>鉄筋記号</span></div><div class="sp" style="left:206px;width:1070px"><span class="st2">１文字目<em>("A"～"Z")</em> ２文字目以降<em>("A"～"Z"、"1"～"9"、"-")</em>（半角６文字まで）</span></div></div>
</div></div>
</body></html>
